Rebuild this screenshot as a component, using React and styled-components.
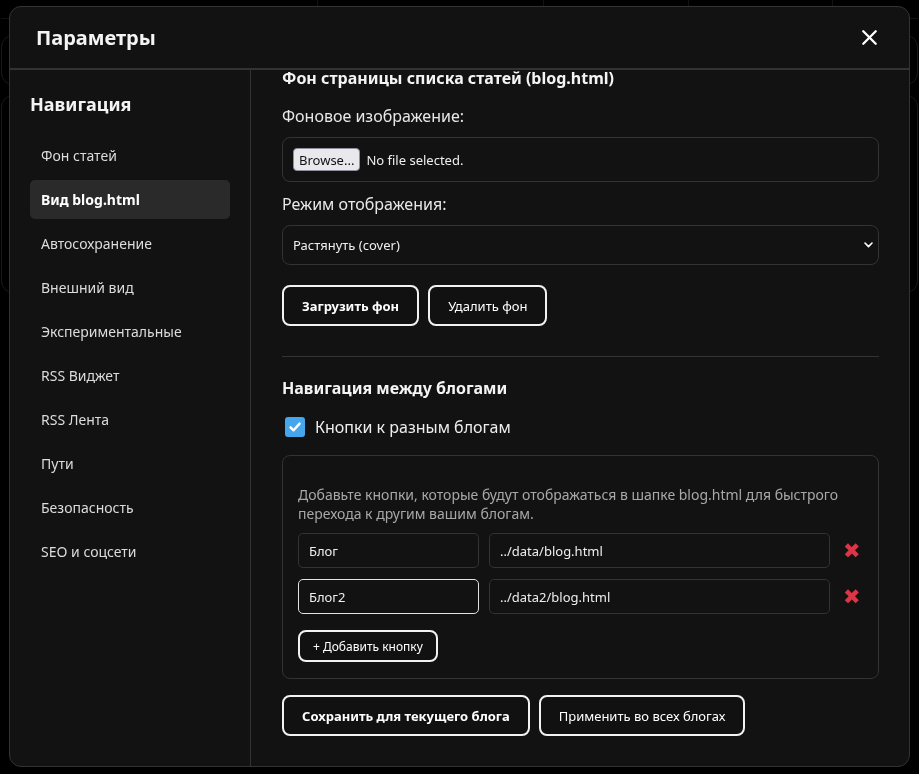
import React, { useState } from 'react'
import styled, { createGlobalStyle } from 'styled-components'

const GlobalStyle = createGlobalStyle`
    * { box-sizing: border-box; }
    body {
        margin: 0;
        background: #000;
        font-family: "Noto Sans", "Open Sans", sans-serif;
        color: #eee;
    }
`;

const navItems = [
    'Фон статей',
    'Вид blog.html',
    'Автосохранение',
    'Внешний вид',
    'Экспериментальные',
    'RSS Виджет',
    'RSS Лента',
    'Пути',
    'Безопасность',
    'SEO и соцсети',
];

export default function App() {
    const [active, setActive] = useState(1);
    const [enabled, setEnabled] = useState(true);
    const [links, setLinks] = useState([
        { name: 'Блог', url: '../data/blog.html' },
        { name: 'Блог2', url: '../data2/blog.html' },
    ]);

    const updateLink = (i, key, value) => {
        setLinks(links.map((l, idx) => idx === i ? { ...l, [key]: value } : l));
    }

    return (
        <>
            <GlobalStyle />
            <Page>
                <TopBar>
                    <TopCell $w={317} />
                    <TopCell $w={226} />
                    <TopCell $w={145} />
                    <TopCell $w={144} />
                </TopBar>
                <BgCard $h={50} />
                <BgCard $h={198} />
            </Page>

            <Overlay>
                <Modal>
                    <Header>
                        <Title>Параметры</Title>
                        <CloseButton aria-label="Закрыть">
                            <svg width="15" height="15" viewBox="0 0 15 15">
                                <path d="M1.3 1.3 L13.7 13.7 M13.7 1.3 L1.3 13.7" stroke="#fff" strokeWidth="2.3" strokeLinecap="round" />
                            </svg>
                        </CloseButton>
                    </Header>
                    <Body>
                        <Sidebar>
                            <SideTitle>Навигация</SideTitle>
                            <NavList>
                                {navItems.map((item, i) => (
                                    <NavItem key={item} $active={i === active} onClick={() => setActive(i)}>
                                        {item}
                                    </NavItem>
                                ))}
                            </NavList>
                        </Sidebar>

                        <Pane>
                            <SectionTitle>Фон страницы списка статей (blog.html)</SectionTitle>

                            <Label>Фоновое изображение:</Label>
                            <FileBox>
                                <BrowseButton>Browse...</BrowseButton>
                                <FileName>No file selected.</FileName>
                            </FileBox>

                            <Label>Режим отображения:</Label>
                            <SelectBox>
                                <span>Растянуть (cover)</span>
                                <svg width="9" height="6" viewBox="0 0 9 6">
                                    <path d="M1 1 L4.5 4.6 L8 1" fill="none" stroke="#fff" strokeWidth="1.6" strokeLinecap="round" strokeLinejoin="round" />
                                </svg>
                            </SelectBox>

                            <ButtonRow>
                                <OutlineButton $primary>Загрузить фон</OutlineButton>
                                <OutlineButton>Удалить фон</OutlineButton>
                            </ButtonRow>

                            <Divider />

                            <SubTitle>Навигация между блогами</SubTitle>
                            <CheckRow onClick={() => setEnabled(!enabled)}>
                                <CheckBox $checked={enabled}>
                                    {enabled && (
                                        <svg width="14" height="14" viewBox="0 0 14 14">
                                            <path d="M2.5 7.3 L5.6 10.3 L11.6 3.6" fill="none" stroke="#fff" strokeWidth="2.4" strokeLinecap="round" strokeLinejoin="round" />
                                        </svg>
                                    )}
                                </CheckBox>
                                Кнопки к разным блогам
                            </CheckRow>

                            <LinksCard>
                                <Hint>
                                    Добавьте кнопки, которые будут отображаться в шапке blog.html для быстрого
                                    перехода к другим вашим блогам.
                                </Hint>
                                {links.map((link, i) => (
                                    <LinkRow key={i}>
                                        <NameInput
                                            value={link.name}
                                            $focused={i === 1}
                                            onChange={e => updateLink(i, 'name', e.target.value)}
                                        />
                                        <UrlInput
                                            value={link.url}
                                            onChange={e => updateLink(i, 'url', e.target.value)}
                                        />
                                        <DeleteButton onClick={() => setLinks(links.filter((_, idx) => idx !== i))}>✖</DeleteButton>
                                    </LinkRow>
                                ))}
                                <AddButton onClick={() => setLinks([...links, { name: '', url: '' }])}>
                                    + Добавить кнопку
                                </AddButton>
                            </LinksCard>

                            <FooterRow>
                                <OutlineButton $primary>Сохранить для текущего блога</OutlineButton>
                                <OutlineButton>Применить во всех блогах</OutlineButton>
                            </FooterRow>
                        </Pane>
                    </Body>
                </Modal>
            </Overlay>
        </>
    )
}

const Page = styled.div`
    padding: 0 1px;
`;

const TopBar = styled.div`
    display: flex;
    height: 19px;
    border-bottom: 1px solid #1c1c1c;
`;

const TopCell = styled.div`
    width: ${props => props.$w}px;
    border-right: 1px solid #1c1c1c;
`;

const BgCard = styled.div`
    height: ${props => props.$h}px;
    margin-top: ${props => props.$h > 100 ? 10 : 16}px;
    border: 1px solid #262626;
    border-radius: 12px;
`;

const Overlay = styled.div`
    position: fixed;
    inset: 0;
    background: rgba(0, 0, 0, 0.35);
    display: flex;
    align-items: flex-start;
    justify-content: center;
    padding-top: 6px;
`;

const Modal = styled.div`
    width: 901px;
    height: 761px;
    background: #121212;
    border: 1px solid #333;
    border-radius: 12px;
    display: flex;
    flex-direction: column;
    overflow: hidden;
`;

const Header = styled.div`
    height: 63px;
    flex-shrink: 0;
    display: flex;
    align-items: center;
    justify-content: space-between;
    padding: 0 32px 0 26px;
    border-bottom: 2px solid #333;
`;

const Title = styled.h2`
    margin: 0;
    font-size: 20px;
    font-weight: 700;
    color: #f4f4f4;
`;

const CloseButton = styled.button`
    background: none;
    border: none;
    padding: 0;
    display: flex;
    cursor: pointer;
`;

const Body = styled.div`
    flex: 1;
    display: flex;
    min-height: 0;
`;

const Sidebar = styled.nav`
    width: 241px;
    flex-shrink: 0;
    border-right: 1px solid #333;
    padding: 22px 20px;
`;

const SideTitle = styled.h3`
    margin: 0 0 20px;
    font-size: 18px;
    line-height: 24px;
    font-weight: 700;
    color: #f4f4f4;
`;

const NavList = styled.div`
    display: flex;
    flex-direction: column;
    gap: 5px;
`;

const NavItem = styled.div`
    height: 39px;
    display: flex;
    align-items: center;
    padding: 0 11px;
    border-radius: 5px;
    font-size: 14px;
    cursor: pointer;
    color: ${props => props.$active ? '#fff' : '#dcdcdc'};
    font-weight: ${props => props.$active ? 700 : 400};
    background: ${props => props.$active ? '#2a2a2a' : 'transparent'};
`;

const Pane = styled.div`
    flex: 1;
    overflow: hidden;
    padding: 0 30px 30px 31px;
`;

const SectionTitle = styled.h3`
    margin: 0 0 18px;
    font-size: 16px;
    line-height: 17px;
    font-weight: 700;
    color: #f4f4f4;
`;

const Label = styled.div`
    font-size: 16px;
    line-height: 22px;
    color: #e8e8e8;
    margin-bottom: 10px;
`;

const FileBox = styled.div`
    height: 45px;
    display: flex;
    align-items: center;
    gap: 6px;
    padding: 0 10px;
    border: 1px solid #333;
    border-radius: 8px;
    margin-bottom: 11px;
`;

const BrowseButton = styled.button`
    height: 23px;
    padding: 0 5px;
    background: #e9e9ed;
    border: 1px solid #8f8f9d;
    border-radius: 4px;
    font-family: inherit;
    font-size: 13px;
    color: #111;
`;

const FileName = styled.span`
    font-size: 13px;
    color: #eee;
`;

const SelectBox = styled.div`
    height: 40px;
    display: flex;
    align-items: center;
    justify-content: space-between;
    padding: 0 5px 0 10px;
    border: 1px solid #333;
    border-radius: 8px;
    font-size: 13px;
    color: #eee;
`;

const ButtonRow = styled.div`
    display: flex;
    gap: 9px;
    margin-top: 20px;
`;

const OutlineButton = styled.button`
    height: 41px;
    padding: 0 18px;
    background: #111;
    color: #fff;
    border: 2px solid #f2f2f2;
    border-radius: 8px;
    font-family: inherit;
    font-size: 13px;
    font-weight: ${props => props.$primary ? 700 : 400};
    cursor: pointer;
`;

const Divider = styled.hr`
    margin: 30px 0 20px;
    border: none;
    border-top: 1px solid #333;
`;

const SubTitle = styled.h3`
    margin: 0 0 17px;
    font-size: 16px;
    line-height: 22px;
    font-weight: 700;
    color: #f4f4f4;
`;

const CheckRow = styled.label`
    display: flex;
    align-items: center;
    gap: 10px;
    height: 22px;
    font-size: 16px;
    color: #eee;
    cursor: pointer;
`;

const CheckBox = styled.span`
    width: 20px;
    height: 20px;
    margin-left: 3px;
    border-radius: 3px;
    display: flex;
    align-items: center;
    justify-content: center;
    background: ${props => props.$checked ? '#45a6ee' : 'transparent'};
    border: ${props => props.$checked ? 'none' : '1px solid #888'};
`;

const LinksCard = styled.div`
    margin-top: 17px;
    border: 1px solid #333;
    border-radius: 8px;
    padding: 16px 15px;
`;

const Hint = styled.p`
    margin: 13px 0 10px;
    font-size: 14px;
    line-height: 19px;
    color: #a8a8a8;
`;

const LinkRow = styled.div`
    display: flex;
    align-items: center;
    gap: 10px;
    & + & {
        margin-top: 11px;
    }
`;

const TextInput = styled.input`
    height: 35px;
    padding: 0 10px;
    background: #121212;
    border: 1px solid ${props => props.$focused ? '#e2e2e2' : '#333'};
    border-radius: 5px;
    color: #eee;
    font-family: inherit;
    font-size: 13px;
    outline: none;
`;

const NameInput = styled(TextInput)`
    width: 181px;
`;

const UrlInput = styled(TextInput)`
    flex: 1;
    min-width: 0;
`;

const DeleteButton = styled.button`
    width: 23px;
    padding: 0;
    background: none;
    border: none;
    color: #dc3545;
    font-size: 21px;
    line-height: 1;
    cursor: pointer;
`;

const AddButton = styled.button`
    margin-top: 16px;
    height: 32px;
    padding: 0 13px;
    background: #111;
    color: #fff;
    border: 2px solid #f2f2f2;
    border-radius: 8px;
    font-family: inherit;
    font-size: 12px;
    cursor: pointer;
`;

const FooterRow = styled.div`
    display: flex;
    gap: 9px;
    margin-top: 16px;
`;
